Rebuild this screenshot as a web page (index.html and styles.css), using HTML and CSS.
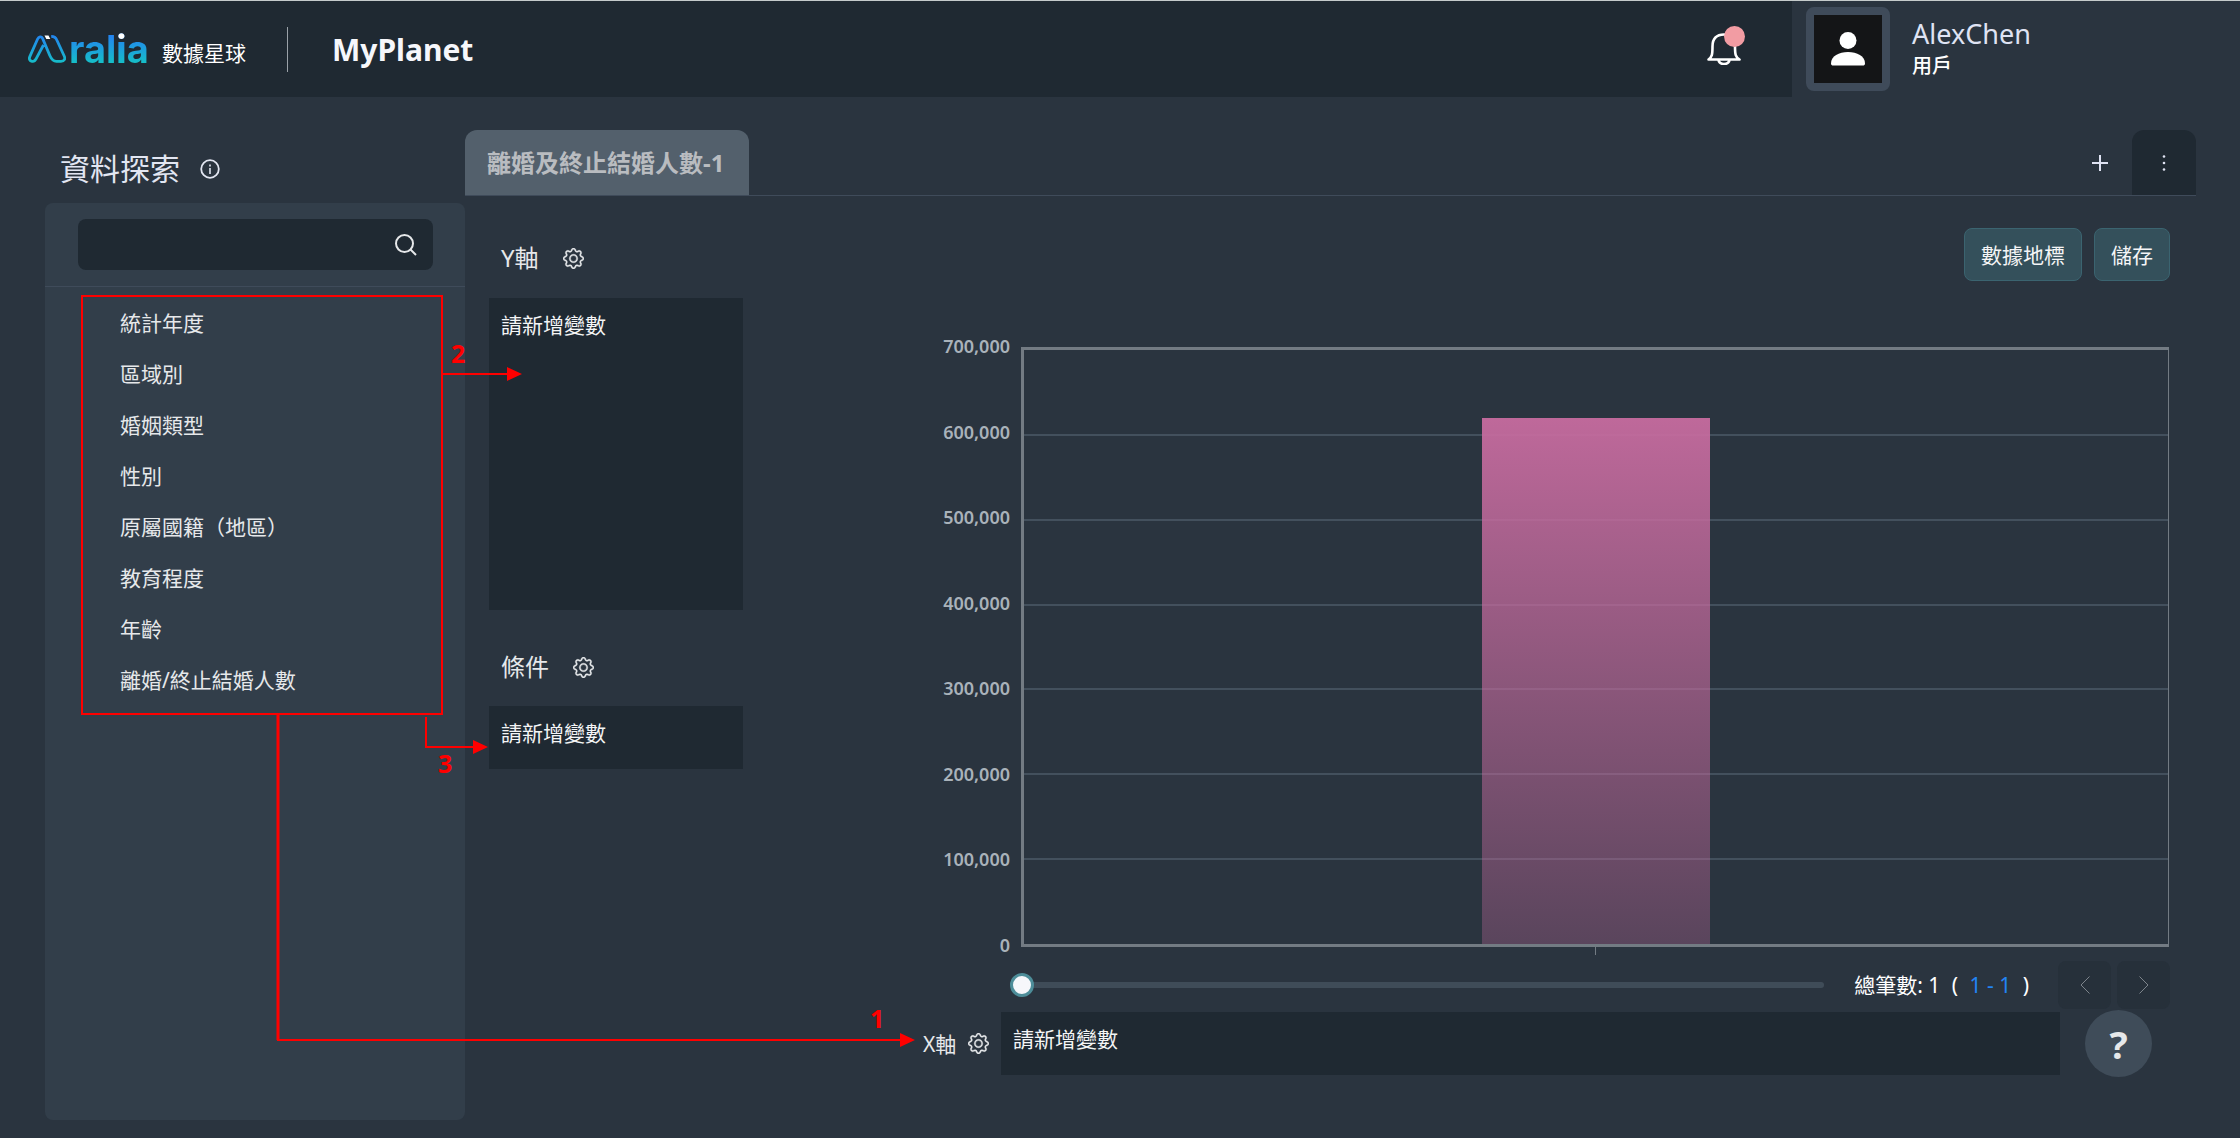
FILE: index.html
```html
<!DOCTYPE html>
<html lang="zh-Hant">
<head>
<meta charset="utf-8">
<meta name="viewport" content="width=device-width, initial-scale=1">
<title>MyPlanet - Aralia 數據星球</title>
<link rel="stylesheet" href="styles.css">
</head>
<body>
<svg class="defs" aria-hidden="true">
  <symbol id="gear" viewBox="0 0 16 16">
    <path d="M8 4.754a3.246 3.246 0 1 0 0 6.492 3.246 3.246 0 0 0 0-6.492zM5.754 8a2.246 2.246 0 1 1 4.492 0 2.246 2.246 0 0 1-4.492 0z"/>
    <path d="M9.796 1.343c-.527-1.79-3.065-1.79-3.592 0l-.094.319a.873.873 0 0 1-1.255.52l-.292-.16c-1.64-.892-3.433.902-2.54 2.541l.159.292a.873.873 0 0 1-.52 1.255l-.319.094c-1.79.527-1.79 3.065 0 3.592l.319.094a.873.873 0 0 1 .52 1.255l-.16.292c-.892 1.64.901 3.434 2.541 2.54l.292-.159a.873.873 0 0 1 1.255.52l.094.319c.527 1.79 3.065 1.79 3.592 0l.094-.319a.873.873 0 0 1 1.255-.52l.292.16c1.64.893 3.434-.902 2.54-2.541l-.159-.292a.873.873 0 0 1 .52-1.255l.319-.094c1.79-.527 1.79-3.065 0-3.592l-.319-.094a.873.873 0 0 1-.52-1.255l.16-.292c.893-1.64-.902-3.433-2.541-2.54l-.292.159a.873.873 0 0 1-1.255-.52l-.094-.319zm-2.633.283c.246-.835 1.428-.835 1.674 0l.094.319a1.873 1.873 0 0 0 2.693 1.115l.291-.16c.764-.415 1.6.42 1.184 1.185l-.159.292a1.873 1.873 0 0 0 1.116 2.692l.318.094c.835.246.835 1.428 0 1.674l-.319.094a1.873 1.873 0 0 0-1.115 2.693l.16.291c.415.764-.42 1.6-1.185 1.184l-.291-.159a1.873 1.873 0 0 0-2.693 1.116l-.094.318c-.246.835-1.428.835-1.674 0l-.094-.319a1.873 1.873 0 0 0-2.692-1.115l-.292.16c-.764.415-1.6-.42-1.184-1.185l.159-.291A1.873 1.873 0 0 0 1.945 8.93l-.319-.094c-.835-.246-.835-1.428 0-1.674l.319-.094A1.873 1.873 0 0 0 3.06 4.377l-.16-.292c-.415-.764.42-1.6 1.185-1.184l.292.159a1.873 1.873 0 0 0 2.692-1.115l.094-.319z"/>
  </symbol>
</svg>

<header class="header">
  <div class="header-main">
    <a class="brand" href="#" aria-label="Aralia 數據星球">
      <svg class="brand-mark" viewBox="0 0 38 28" aria-hidden="true">
        <defs>
          <linearGradient id="brandfill" gradientUnits="userSpaceOnUse" x1="0" y1="0" x2="0" y2="28">
            <stop offset="0" stop-color="#2384f0"/>
            <stop offset="1" stop-color="#16bdc8"/>
          </linearGradient>
        </defs>
        <path d="M15.500 10 8.200 23.600C7.200 25.600 5.600 26.600 4 26.300 1.600 26 .8 23.800 1.800 21.600L9.600 4C10.700 1.400 13.400 1 14.600 3.400L21.800 20.500C23.500 24.500 25 26.300 28.500 26.300L33 26.300C36.500 26.300 37.500 23.800 36.200 21L28.800 5C27.800 2.600 26.300 1.400 23.200 1.400" fill="none" stroke="url(#brandfill)" stroke-width="2.800"/>
        <path d="M16.500 .5h4l1.800 3.500h-4z" fill="#fff"/>
      </svg>
      <span class="brand-word">ral<span class="brand-i">i</span>a</span>
      <span class="brand-sub">數據星球</span>
    </a>
    <h1 class="site-name">MyPlanet</h1>
    <button class="bell" type="button" aria-label="通知">
      <svg viewBox="0 0 34 32" aria-hidden="true">
        <path d="M1.500 26.500c3.500-2.500 4-5 4-13C5.500 5.500 9.500 1.500 17 1.500s11 4 11 12c0 8 .5 10.500 4.500 13zM11.500 27c.5 2.600 2.700 4 5.500 4s5-1.400 5.500-4" fill="none" stroke="#fff" stroke-width="2.600" stroke-linejoin="round"/>
      </svg>
      <span class="bell-dot"></span>
    </button>
  </div>
  <div class="user">
    <span class="avatar">
      <svg viewBox="0 0 34 34" aria-hidden="true"><circle cx="17" cy="8.500" r="8.500"/><path d="M0 31.500C0 24 8 20 17 20s17 4 17 11.500c0 1.500-1 2-2 2H2c-1 0-2-.5-2-2z"/></svg>
    </span>
    <div class="user-text">
      <p class="user-name">AlexChen</p>
      <p class="user-role">用戶</p>
    </div>
  </div>
</header>

<main class="main">
  <aside class="sidebar">
    <h2 class="sidebar-title">資料探索
      <svg class="info" viewBox="0 0 20 20" aria-hidden="true"><circle cx="10" cy="10" r="8.800" fill="none" stroke="currentColor" stroke-width="1.800"/><path d="M10 9v6M10 5.500v2" stroke="currentColor" stroke-width="1.600"/></svg>
    </h2>
    <div class="panel">
      <div class="search">
        <label class="search-box">
          <input type="text" aria-label="搜尋">
          <svg viewBox="0 0 22 22" aria-hidden="true"><circle cx="9.500" cy="9.500" r="8.500"/><path d="M15.500 15.500 21 21"/></svg>
        </label>
      </div>
      <ul class="fields">
        <li>統計年度</li>
        <li>區域別</li>
        <li>婚姻類型</li>
        <li>性別</li>
        <li>原屬國籍（地區）</li>
        <li>教育程度</li>
        <li>年齡</li>
        <li>離婚/終止結婚人數</li>
      </ul>
    </div>
  </aside>

  <section class="content">
    <nav class="tabs">
      <button class="tab" type="button">離婚及終止結婚人數-1</button>
      <button class="tab-add" type="button" aria-label="新增">
        <svg viewBox="0 0 16 16" aria-hidden="true"><path d="M8 0v16M0 8h16"/></svg>
      </button>
      <button class="tab-more" type="button" aria-label="更多">
        <svg viewBox="0 0 4 16" aria-hidden="true"><circle cx="2" cy="1.500" r="1.300"/><circle cx="2" cy="8" r="1.300"/><circle cx="2" cy="14.500" r="1.300"/></svg>
      </button>
    </nav>

    <div class="workspace">
      <div class="shelves">
        <div class="shelf-head">Y軸 <button class="gear" type="button" aria-label="Y軸設定"><svg><use href="#gear"/></svg></button></div>
        <div class="drop drop-tall">請新增變數</div>
        <div class="shelf-head">條件 <button class="gear" type="button" aria-label="條件設定"><svg><use href="#gear"/></svg></button></div>
        <div class="drop">請新增變數</div>
      </div>

      <div class="view">
        <div class="actions">
          <button class="action" type="button">數據地標</button>
          <button class="action" type="button">儲存</button>
        </div>

        <div class="chart">
          <div class="scale">
            <span>700,000</span><span>600,000</span><span>500,000</span><span>400,000</span><span>300,000</span><span>200,000</span><span>100,000</span><span>0</span>
          </div>
          <div class="plot">
            <div class="lines"><i></i><i></i><i></i><i></i><i></i><i></i><i></i></div>
            <div class="bar" style="height: 88.6%"></div>
          </div>
          <div class="tick"></div>
        </div>

        <div class="pager">
          <input class="slider" type="range" min="0" max="100" value="0" aria-label="捲動">
          <p class="count">總筆數: 1 <span class="paren">(</span> <span class="range">1 - 1</span> <span class="paren">)</span></p>
          <div class="steps">
            <button class="step" type="button" aria-label="上一頁"><svg viewBox="0 0 10 18" aria-hidden="true"><path d="M9.500.5 1 9l8.500 8.500"/></svg></button>
            <button class="step" type="button" aria-label="下一頁"><svg viewBox="0 0 10 18" aria-hidden="true"><path d="M.5.5 9 9l-8.500 8.500"/></svg></button>
          </div>
        </div>

        <div class="xrow">
          <div class="xlabel">X軸 <button class="gear" type="button" aria-label="X軸設定"><svg><use href="#gear"/></svg></button></div>
          <div class="drop">請新增變數</div>
          <button class="help" type="button" aria-label="說明">?</button>
        </div>
      </div>
    </div>
  </section>
</main>

<!-- tutorial callouts over the page -->
<svg class="callouts" width="940" height="1060" aria-hidden="true">
  <g fill="none" stroke="#f00" stroke-width="2">
    <path d="M82 296h360v418H82zM441 374h68M426 717v30h48"/>
    <path d="M278 714v326" stroke-width="3"/>
    <path d="M277 1040h625"/>
  </g>
  <path d="M507 367l15 7-15 7zM473 740l15 7-15 7zM900 1033l15 7-15 7z" fill="#f00"/>
  <g class="callout-text">
    <text x="451" y="363">2</text>
    <text x="438" y="773">3</text>
    <text x="870" y="1028">1</text>
  </g>
</svg>
</body>
</html>
```
FILE: styles.css
```css
:root {
  --bg: #2a343f;
  --deep: #1f2932;
  --panel: #323e4a;
  --line: #3f4b5a;
  --text: #e6e8ea;
}

* { box-sizing: border-box; }

body {
  margin: 0;
  min-height: 100vh;
  display: flex;
  flex-direction: column;
  position: relative;
  background: var(--bg);
  color: var(--text);
  font: 21px/32px "Noto Sans", "Noto Sans CJK TC", sans-serif;
}

h1, h2, p, ul { margin: 0; padding: 0; }
ul { list-style: none; }

button {
  padding: 0;
  border: 0;
  background: none;
  color: inherit;
  font: inherit;
  cursor: pointer;
}

svg { display: block; }
.defs { position: absolute; width: 0; height: 0; }

/* header */
.header {
  display: flex;
  height: 97px;
  border-top: 1px solid #c5cbcb;
}

.header-main {
  flex: 1;
  display: flex;
  align-items: center;
  padding: 0 51px 0 28px;
  background: var(--deep);
}

.brand {
  display: flex;
  align-items: center;
  color: #fff;
  text-decoration: none;
}

.brand-mark { width: 38px; height: 28px; margin-right: 3px; }

.brand-word, .brand-i {
  background: linear-gradient(#2384f0 20%, #16bdc8 80%);
  background-clip: text;
  -webkit-background-clip: text;
  color: transparent;
}

.brand-word { width: 84px; font: 700 38px/44px Inter, sans-serif; }
.brand-i { background-image: linear-gradient(#fff 34%, #2090e8 34%, #16bdc8 80%); }
.brand-sub { width: 125px; margin: 7px 0 0 9px; }

.site-name {
  margin-right: auto;
  padding-left: 44px;
  border-left: 1px solid #9aa1a8;
  color: #f6f7fb;
  font-size: 30px;
  line-height: 45px;
}

.bell { position: relative; }
.bell svg { width: 34px; height: 32px; }

.bell-dot {
  position: absolute;
  top: -7px;
  right: -4px;
  width: 21px;
  height: 21px;
  border-radius: 50%;
  background: #f29ca3;
}

.user {
  width: 20%;
  display: flex;
  align-items: center;
  gap: 22px;
  padding-left: 14px;
}

.avatar {
  display: grid;
  place-items: center;
  width: 84px;
  height: 84px;
  border: 8px solid #3f4b5a;
  border-radius: 8px;
  background: #141517;
}

.avatar svg { width: 34px; height: 34px; fill: #fff; }
.user-text { padding-top: 2px; }
.user-name { color: #dfe3f3; font-size: 27px; }
.user-role { color: #fff; font-size: 20px; font-weight: 500; }

/* layout */
.main {
  flex: 1;
  display: grid;
  grid-template-columns: 420px 1fr;
  padding: 33px 44px 0 45px;
}

.sidebar { display: flex; flex-direction: column; padding-bottom: 18px; }

.sidebar-title {
  display: flex;
  align-items: center;
  gap: 20px;
  height: 73px;
  padding: 4px 15px 0;
  color: #e2e6f2;
  font-size: 30px;
  font-weight: 400;
}

.info { width: 20px; height: 20px; }

.panel { flex: 1; border-radius: 8px; background: var(--panel); }
.search { padding: 16px 32px 16px 33px; border-bottom: 1px solid var(--line); }

.search-box {
  display: flex;
  align-items: center;
  height: 51px;
  padding: 0 16px;
  border-radius: 8px;
  background: var(--deep);
}

.search-box input {
  flex: 1;
  min-width: 0;
  border: 0;
  outline: 0;
  background: none;
  color: inherit;
  font: inherit;
}

.search-box svg {
  width: 22px;
  height: 22px;
  fill: none;
  stroke: var(--text);
  stroke-width: 2;
}

.fields { padding: 11px 75px; }
.fields li { line-height: 51px; white-space: nowrap; }

/* tabs */
.content { display: flex; flex-direction: column; min-width: 0; }

.tabs { display: flex; height: 66px; border-bottom: 1px solid var(--line); }

.tab {
  padding: 0 25px 0 22px;
  border-radius: 12px 12px 0 0;
  background: #53606c;
  color: #b9bcc0;
  font-size: 24px;
  font-weight: 700;
}

.tab-add, .tab-more { display: grid; place-items: center; width: 64px; }
.tab-add { margin-left: auto; color: #dfe3f3; }
.tab-add svg { width: 16px; height: 16px; stroke: currentColor; stroke-width: 2; }
.tab-more { border-radius: 12px 12px 0 0; background: var(--deep); }
.tab-more svg { width: 4px; height: 16px; fill: #dfe3f3; }

/* shelves */
.workspace { flex: 1; display: flex; gap: 180px; padding: 32px 26px 63px 24px; }
.shelves { flex: none; width: 254px; }

.shelf-head {
  display: flex;
  align-items: center;
  gap: 24px;
  height: 96px;
  padding: 18px 12px 0;
  font-size: 24px;
}

.shelf-head:first-child { height: 70px; padding: 0 12px 10px; }

.gear svg {
  width: 21px;
  height: 21px;
  overflow: visible;
  fill: var(--text);
  stroke: var(--text);
}

.gear use { stroke-width: .3; }

.drop {
  height: 63px;
  padding: 11px 12px;
  background: var(--deep);
  color: #f4f5f6;
}

.drop-tall { height: 312px; }

/* chart */
.view { flex: 1; display: flex; flex-direction: column; min-width: 0; }
.actions { display: flex; justify-content: flex-end; gap: 12px; }

.action {
  height: 53px;
  padding: 0 16px;
  border: 1px solid #3b6470;
  border-radius: 8px;
  background: #34505b;
  color: #f4f5f6;
}

.chart {
  flex: 1;
  display: grid;
  grid-template: minmax(400px, 1fr) 8px / 87px 1fr;
  column-gap: 11px;
  margin: 66px 1px 0 0;
}

.scale {
  display: flex;
  flex-direction: column;
  justify-content: space-between;
  margin: -11px 0 -7px;
  color: #a9b2ba;
  font-size: 18px;
  font-weight: 600;
  line-height: 20px;
  text-align: right;
}

.plot {
  display: grid;
  border: 3px solid #737b83;
  border-right-width: 1px;
}

.scale { margin-bottom: -8px; }
.lines, .bar { grid-area: 1 / 1; }
.lines { display: grid; grid-template-rows: repeat(7, 1fr); }
.lines i + i { margin-top: -1px; border-top: 2px solid #43505d; }

.bar {
  place-self: end center;
  width: 20%;
  background: linear-gradient(rgb(200 108 160 / 94%), rgb(200 108 160 / 30%));
}

.tick {
  grid-column: 2;
  justify-self: center;
  width: 1px;
  background: #737b83;
}

.pager { display: flex; align-items: center; height: 48px; margin: 6px 0 3px; padding-left: 87px; }

.slider {
  flex: 1;
  height: 24px;
  margin: 0 30px 0 0;
  appearance: none;
  background: none;
}

.slider::-webkit-slider-runnable-track {
  height: 6px;
  border-radius: 3px;
  background: linear-gradient(90deg, transparent 12px, #3f4c58 12px);
}

.slider::-webkit-slider-thumb {
  appearance: none;
  width: 24px;
  height: 24px;
  margin-top: -9px;
  border: 3px solid #4d8d99;
  border-radius: 50%;
  background: #f6f7fb;
}

.count { color: #fff; white-space: nowrap; }
.paren { margin: 0 6px; }
.range { color: #2285f5; }
.steps { display: flex; gap: 6px; margin-left: 23px; }

.step {
  display: grid;
  place-items: center;
  width: 53px;
  height: 48px;
  border-radius: 8px;
  background: #26303a;
}

.step svg { width: 10px; height: 18px; fill: none; stroke: #7d848b; }

.xrow { display: flex; align-items: center; padding-right: 18px; }
.xlabel { display: flex; align-items: center; gap: 12px; width: 78px; }
.xrow .drop { flex: 1; }

.help {
  width: 67px;
  height: 67px;
  margin: -2px 0 -2px 25px;
  border-radius: 50%;
  background: #3f4c59;
  font-size: 38px;
  font-weight: 700;
}

/* callouts */
.callouts { position: absolute; top: 0; left: 0; pointer-events: none; }
.callout-text { fill: #f00; font-size: 25px; font-weight: 700; }
```
